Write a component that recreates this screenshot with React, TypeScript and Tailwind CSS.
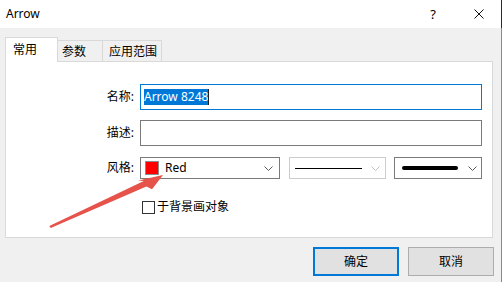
import React from "react";

const Chevron = ({ color = "#5a5a5a" }: { color?: string }) => (
  <svg width="9" height="5" viewBox="0 0 9 5" className="shrink-0">
    <path d="M0.5 0.5 L4.5 4.5 L8.5 0.5" fill="none" stroke={color} strokeWidth="1" />
  </svg>
);

export default function App() {
  return (
    <div className="relative flex h-[282px] w-[502px] flex-col overflow-hidden bg-[#f0f0f0] font-['Noto_Sans','Noto_Sans_CJK_SC',sans-serif] text-[12px] leading-[16px] text-black">
      {/* Title bar */}
      <div className="flex h-[28px] shrink-0 items-center border-r border-[#2b2b2b] bg-white pl-[6px] pr-[17px]">
        <span className="text-[12px]">Arrow</span>
        <span className="ml-auto text-[13px]">?</span>
        <svg width="10" height="10" viewBox="0 0 10 10" className="ml-[38px]">
          <path d="M0.5 0.5 L9.5 9.5 M9.5 0.5 L0.5 9.5" stroke="#111" strokeWidth="1" />
        </svg>
      </div>

      <div className="flex flex-1 flex-col border-r border-[#8a8a8a] pl-[5px] pr-[8px] pt-[9px]">
        {/* Tabs */}
        <div className="-mb-px flex h-[25px] items-end">
          <div className="relative z-10 flex h-[25px] w-[53px] items-center border border-b-0 border-[#d9d9d9] bg-white pl-[7px]">
            常用
          </div>
          <div className="-ml-px flex h-[22px] w-[46px] items-center border border-b-0 border-[#d9d9d9] pl-[4px]">
            参数
          </div>
          <div className="-ml-px flex h-[22px] w-[60px] items-center border border-b-0 border-[#d9d9d9] pl-[6px]">
            应用范围
          </div>
        </div>

        {/* Panel */}
        <div className="flex h-[177px] flex-col border border-[#d9d9d9] bg-white pt-[22px]">
          <div className="flex h-[26px] items-center">
            <span className="w-[128px] text-right">名称:</span>
            <div className="ml-[6px] flex h-[26px] w-[342px] items-center border border-[#0078d7] pl-[3px]">
              <span className="bg-[#0078d7] leading-[16px] text-white">Arrow 8248</span>
              <span className="h-[16px] w-px bg-[#222]" />
            </div>
          </div>

          <div className="mt-[10px] flex h-[26px] items-center">
            <span className="w-[128px] text-right">描述:</span>
            <div className="ml-[6px] h-[26px] w-[342px] border border-[#7a7a7a]" />
          </div>

          <div className="mt-[11px] flex h-[22px] items-center">
            <span className="w-[128px] text-right">风格:</span>
            <div className="ml-[6px] flex h-[22px] w-[140px] items-center border border-[#7a7a7a] pl-[4px] pr-[6px]">
              <span className="h-[14px] w-[14px] border border-[#8c8c8c] bg-[#ff0000]" />
              <span className="ml-[6px]">Red</span>
              <span className="ml-auto">
                <Chevron />
              </span>
            </div>
            <div className="ml-[9px] flex h-[22px] w-[97px] items-center border border-[#cccccc] pl-[5px] pr-[5px]">
              <span className="h-px w-[67px] bg-black" />
              <span className="ml-auto">
                <Chevron color="#c4c4c4" />
              </span>
            </div>
            <div className="ml-[8px] flex h-[22px] w-[88px] items-center border border-[#7a7a7a] pl-[7px] pr-[4px]">
              <span className="h-[4px] w-[56px] rounded-full bg-black" />
              <span className="ml-auto">
                <Chevron />
              </span>
            </div>
          </div>

          <div className="mt-[20px] flex items-center pl-[136px]">
            <span className="h-[13px] w-[13px] border border-[#333]" />
            <span className="ml-[2px]">于背景画对象</span>
          </div>
        </div>

        {/* Buttons */}
        <div className="-mr-px mt-[9px] flex justify-end gap-[9px]">
          <button className="flex h-[29px] w-[86px] items-center justify-center border-2 border-[#0078d7] bg-[#e1e1e1]">
            确定
          </button>
          <button className="flex h-[29px] w-[86px] items-center justify-center border border-[#adadad] bg-[#e1e1e1]">
            取消
          </button>
        </div>
      </div>

      {/* Annotation arrow */}
      <svg
        className="pointer-events-none absolute left-0 top-0"
        width="502"
        height="282"
        viewBox="0 0 502 282"
      >
        <polygon
          points="49.3,226 143.8,181 138,180.6 163,175 152,189.2 146.4,186.4 50.7,228"
          fill="#e5534b"
        />
      </svg>
    </div>
  );
}
